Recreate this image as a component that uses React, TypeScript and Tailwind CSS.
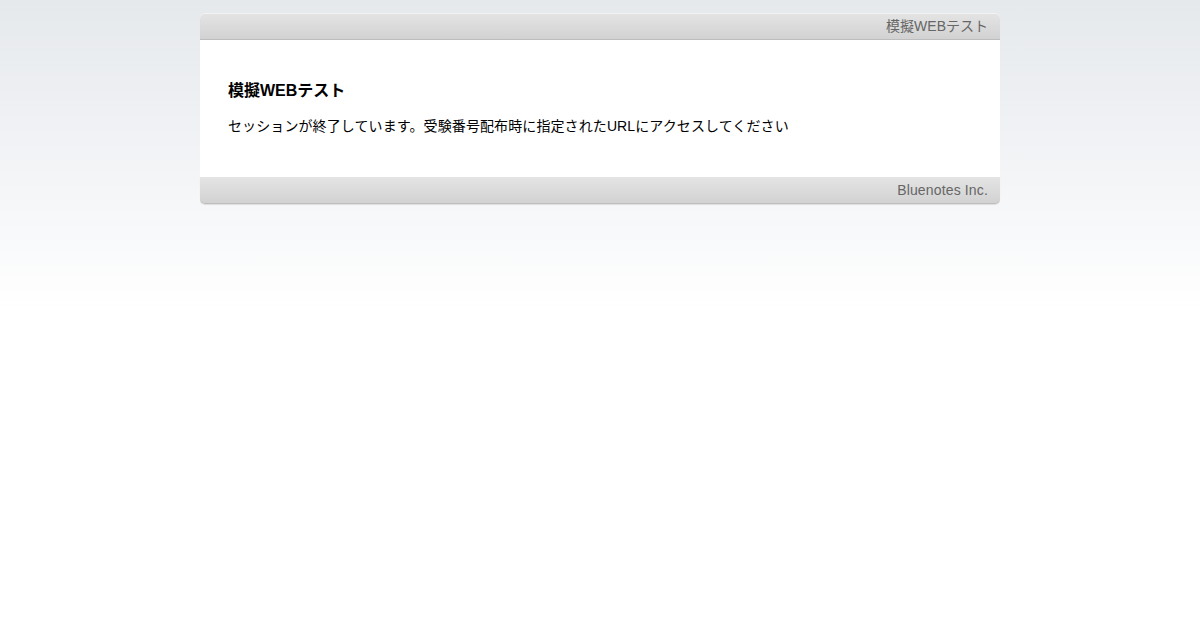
export default function App() {
  return (
    <div
      className="min-h-[630px] w-full bg-[linear-gradient(to_bottom,#e6e9ec_0px,#f3f5f7_180px,#ffffff_310px,#ffffff_100%)] pt-[13px]"
      style={{ fontFamily: '"Liberation Sans", Arial, "Noto Sans CJK JP", sans-serif' }}
    >
      <div className="mx-auto w-[800px]">
        <div className="flex h-[27px] items-center justify-end rounded-t-[5px] border-b border-[#bdbdbd] bg-[linear-gradient(to_bottom,#e4e4e4,#d2d2d2)] px-[12px] text-[14px] text-[#666666] shadow-[inset_0_1px_0_#f2f2f2]">
          模擬WEBテスト
        </div>
        <div className="bg-white px-[28px] pb-[41px] pt-[39px]">
          <h1 className="text-[16px] font-bold leading-[24px] text-black">模擬WEBテスト</h1>
          <p className="mt-[13px] text-[14px] leading-[20px] tracking-[0.1px] text-black">
            セッションが終了しています。受験番号配布時に指定されたURLにアクセスしてください
          </p>
        </div>
        <div className="flex h-[27px] items-center justify-end rounded-b-[5px] border-b border-[#bdbdbd] bg-[linear-gradient(to_bottom,#e4e4e4,#d2d2d2)] px-[12px] text-[14px] tracking-[0.15px] text-[#666666] shadow-[0_1px_1px_rgba(0,0,0,0.1)]">
          Bluenotes Inc.
        </div>
      </div>
    </div>
  );
}
